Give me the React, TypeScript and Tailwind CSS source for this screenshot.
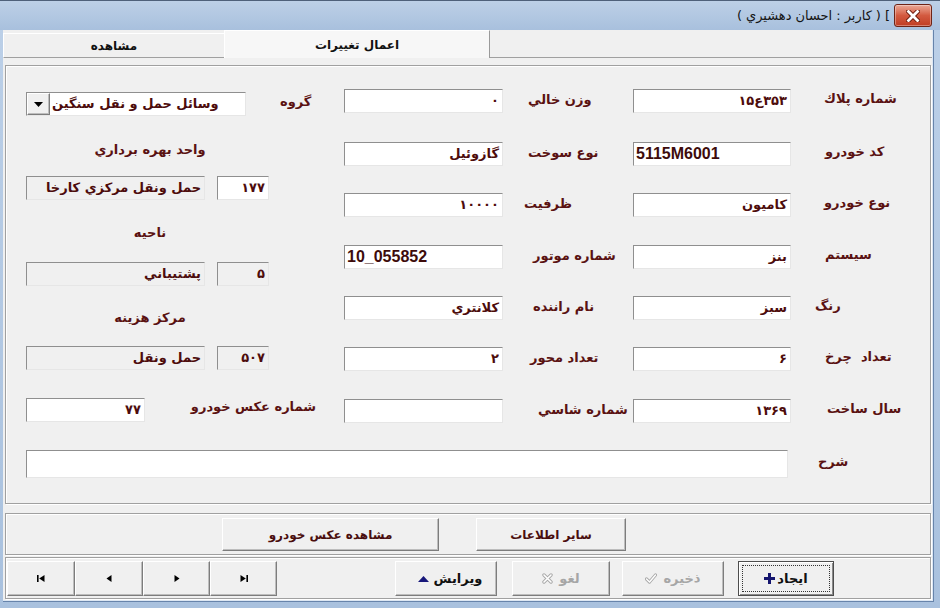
import React from "react";

const lbl = "text-[#5a1212] font-bold text-[13px] leading-[16px] whitespace-pre";
const valTxt = "text-[#4d0c0c] font-bold text-[13px] leading-[16px] whitespace-pre";
const sunken = "border border-t-[#8f8f8f] border-l-[#8f8f8f] border-r-[#e6e6e6] border-b-[#e6e6e6]";
const raised = "border border-t-white border-l-white border-r-[#7d7d7d] border-b-[#7d7d7d] shadow-[inset_-1px_-1px_0_#bdbdbd] bg-[#f0f0f0]";
const etched = "border border-[#a0a0a0] shadow-[inset_1px_1px_0_#ffffff,1px_1px_0_#ffffff]";

function Field({ cls, value, gray = false, latin = false }: { cls: string; value?: React.ReactNode; gray?: boolean; latin?: boolean }) {
  return (
    <div
      className={`${cls} h-[24px] ${sunken} ${gray ? "bg-[#f0f0f0]" : "bg-white"} flex items-center ${
        latin
          ? "justify-start pl-[2px] font-['Liberation_Sans',sans-serif] text-[16px] font-bold text-[#3d0b0b]"
          : `justify-end pr-[3px] ${valTxt}`
      }`}
    >
      {value}
    </div>
  );
}

type Row = {
  mt: string;
  mv: React.ReactNode;
  mLatin?: boolean;
  ml: string;
  mlp: string;
  rv: React.ReactNode;
  rLatin?: boolean;
  rl: string;
  rlp: string;
};

const rows: Row[] = [
  { mt: "mt-0", mv: "۰", ml: "وزن خالي", mlp: "pl-[25px]", rv: <bdo dir="ltr">۱۵ع۳۵۳</bdo>, rl: "شماره پلاك", rlp: "pl-[33px]" },
  { mt: "mt-[29px]", mv: "گازوئيل", ml: "نوع سوخت", mlp: "pl-[25px]", rv: "5115M6001", rLatin: true, rl: "کد خودرو", rlp: "pl-[34px]" },
  { mt: "mt-[27px]", mv: "۱۰۰۰۰", ml: "ظرفيت", mlp: "pl-[21px]", rv: "کاميون", rl: "نوع خودرو", rlp: "pl-[33px]" },
  { mt: "mt-[28px]", mv: "10_055852", mLatin: true, ml: "شماره موتور", mlp: "pl-[30px]", rv: "بنز", rl: "سيستم", rlp: "pl-[34px]" },
  { mt: "mt-[27px]", mv: "کلانتري", ml: "نام راننده", mlp: "pl-[30px]", rv: "سبز", rl: "رنگ", rlp: "pl-[24px]" },
  { mt: "mt-[27px]", mv: "۲", ml: "تعداد محور", mlp: "pl-[27px]", rv: "۶", rl: "تعداد  چرخ", rlp: "pl-[34px]" },
  { mt: "mt-[28px]", mv: "", ml: "شماره شاسي", mlp: "pl-[35px]", rv: "۱۳۶۹", rl: "سال ساخت", rlp: "pl-[36px]" },
];

function CloseBtn() {
  return (
    <div className="w-[38px] h-[23px] rounded-[3px] border border-[#6e2416] bg-gradient-to-b from-[#eaa896] via-[#d35a40] to-[#c03c22] shadow-[inset_0_0_0_1px_rgba(255,255,255,0.35)] flex items-center justify-center">
      <svg width="14" height="12" viewBox="0 0 14 12">
        <path d="M2.5 1.5 L11.5 10.5 M11.5 1.5 L2.5 10.5" stroke="#6a1a0c" strokeWidth="4.6" strokeLinecap="square" />
        <path d="M2.5 1.5 L11.5 10.5 M11.5 1.5 L2.5 10.5" stroke="#ffffff" strokeWidth="2.8" strokeLinecap="square" />
      </svg>
    </div>
  );
}

function NavIcon({ kind }: { kind: number }) {
  if (kind === 0)
    return (
      <svg width="8" height="7" viewBox="0 0 8 7">
        <rect x="0" y="0" width="1.6" height="7" fill="#000" />
        <path d="M7.5 0 L2.2 3.5 L7.5 7Z" fill="#000" />
      </svg>
    );
  if (kind === 1)
    return (
      <svg width="6" height="7" viewBox="0 0 6 7">
        <path d="M5.5 0 L0.5 3.5 L5.5 7Z" fill="#000" />
      </svg>
    );
  if (kind === 2)
    return (
      <svg width="6" height="7" viewBox="0 0 6 7">
        <path d="M0.5 0 L5.5 3.5 L0.5 7Z" fill="#000" />
      </svg>
    );
  return (
    <svg width="8" height="7" viewBox="0 0 8 7">
      <path d="M0.5 0 L5.8 3.5 L0.5 7Z" fill="#000" />
      <rect x="6.4" y="0" width="1.6" height="7" fill="#000" />
    </svg>
  );
}

export default function App() {
  return (
    <div className="w-[940px] h-[608px] overflow-hidden flex flex-col bg-gradient-to-b from-[#bcd0e8] to-[#a9c1de] font-['DejaVu_Sans',sans-serif]">
      {/* title bar */}
      <div className="h-[30px] flex items-center justify-end pr-[8px] border-t border-[#4f617a] bg-gradient-to-b from-[#bdd0e7] to-[#a8c0dd]">
        <div className="flex items-center gap-[4px] text-[13px] leading-[16px] text-[#141414] mr-[4px] mt-[1px]">
          <span>(</span>
          <span>دهشيري</span>
          <span>احسان</span>
          <span>:</span>
          <span>کاربر</span>
          <span>)</span>
          <span>[</span>
        </div>
        <CloseBtn />
      </div>

      <div className="flex pl-[3px]">
        <div className="flex flex-col border-r border-b border-[#6784ab] pr-[1px] pb-[1px] bg-[#dde7f3]">
          {/* client area */}
          <div className="w-[929px] h-[570px] bg-[#f0f0f0] flex flex-col">
            {/* tabs */}
            <div className="h-[28px] flex items-end">
              <div className="w-[221px] h-[25px] bg-[#f0f0f0] border-t border-l border-white border-b border-b-[#a0a0a0] flex items-center justify-center text-[12px] font-bold text-[#111]">
                مشاهده
              </div>
              <div className="w-[266px] h-[28px] bg-[#f7f7f7] border-t border-l border-white border-r border-r-[#9a9a9a] flex items-center justify-center text-[12px] font-bold text-[#111]">
                اعمال تغييرات
              </div>
              <div className="flex-1 h-full border-b border-[#a0a0a0]" />
            </div>

            {/* main group box */}
            <div className={`ml-[2px] mt-[7px] w-[926px] h-[439px] ${etched} flex flex-col pt-[23px]`}>
              <div className="flex items-start">
                {/* left column */}
                <div className="ml-[20px] mt-[3px] w-[290px] flex flex-col">
                  <div className="flex items-center h-[24px]">
                    <div className={`w-[220px] h-[24px] ${sunken} bg-white flex items-center`}>
                      <div className={`w-[23px] h-[22px] ${raised} flex items-center justify-center`}>
                        <svg width="9" height="5" viewBox="0 0 9 5">
                          <path d="M0 0 L9 0 L4.5 5Z" fill="#000" />
                        </svg>
                      </div>
                      <span className={`${valTxt} pl-[2px]`}>وسائل حمل و نقل سنگين</span>
                    </div>
                    <span className={`${lbl} ml-[34px] mb-[4px]`}>گروه</span>
                  </div>
                  <div className={`${lbl} mt-[26px] w-[248px] text-center`}>واحد بهره برداري</div>
                  <div className="mt-[18px] flex">
                    <Field cls="w-[179px]" gray value="حمل ونقل مرکزي کارخا" />
                    <div className="ml-[12px]">
                      <Field cls="w-[52px]" value="۱۷۷" />
                    </div>
                  </div>
                  <div className={`${lbl} mt-[25px] w-[248px] text-center`}>ناحيه</div>
                  <div className="mt-[21px] flex">
                    <Field cls="w-[179px]" gray value="پشتيباني" />
                    <div className="ml-[12px]">
                      <Field cls="w-[52px]" gray value="۵" />
                    </div>
                  </div>
                  <div className={`${lbl} mt-[24px] w-[248px] text-center`}>مرکز هزينه</div>
                  <div className="mt-[20px] flex">
                    <Field cls="w-[179px]" gray value="حمل ونقل" />
                    <div className="ml-[12px]">
                      <Field cls="w-[52px]" gray value="۵۰۷" />
                    </div>
                  </div>
                  <div className="mt-[28px] flex items-start">
                    <Field cls="w-[127px]" value="۷۷" />
                    <span className={`${lbl} ml-[46px] pt-[1px]`}>شماره عکس خودرو</span>
                  </div>
                </div>

                {/* middle + right columns */}
                <div className="ml-[28px] flex flex-col">
                  {rows.map((r, i) => (
                    <div key={i} className={`${r.mt} flex items-start h-[24px]`}>
                      <Field cls="w-[159px]" value={r.mv} latin={r.mLatin} />
                      <div className={`w-[130px] ${r.mlp} -mt-[2px]`}>
                        <span className={lbl}>{r.ml}</span>
                      </div>
                      <Field cls="w-[158px]" value={r.rv} latin={r.rLatin} />
                      <div className={`${r.rlp} -mt-[3px]`}>
                        <span className={lbl}>{r.rl}</span>
                      </div>
                    </div>
                  ))}
                </div>
              </div>

              {/* description */}
              <div className="mt-[27px] ml-[20px] flex items-start">
                <div className={`w-[762px] h-[28px] ${sunken} bg-white`} />
                <span className={`${lbl} ml-[30px] pt-[4px]`}>شرح</span>
              </div>
            </div>

            {/* panel 1 */}
            <div className={`ml-[2px] mt-[9px] w-[926px] h-[42px] ${etched} flex items-start pt-[4px]`}>
              <div className={`ml-[216px] w-[217px] h-[33px] ${raised} flex items-center justify-center text-[#4a0e0e] font-bold text-[12px]`}>
                مشاهده عکس خودرو
              </div>
              <div className={`ml-[37px] w-[150px] h-[33px] ${raised} flex items-center justify-center text-[#4a0e0e] font-bold text-[12px]`}>
                ساير اطلاعات
              </div>
            </div>

            {/* panel 2 */}
            <div className={`ml-[2px] mt-[2px] w-[926px] h-[42px] ${etched} flex items-start pt-[3px]`}>
              <div className={`ml-[1px] w-[68px] h-[35px] ${raised} flex items-center justify-center`}>
                <NavIcon kind={0} />
              </div>
              <div className={`w-[68px] h-[35px] ${raised} flex items-center justify-center`}>
                <NavIcon kind={1} />
              </div>
              <div className={`w-[67px] h-[35px] ${raised} flex items-center justify-center`}>
                <NavIcon kind={2} />
              </div>
              <div className={`w-[67px] h-[35px] ${raised} flex items-center justify-center`}>
                <NavIcon kind={3} />
              </div>

              <div className={`ml-[118px] w-[102px] h-[35px] ${raised} flex items-center justify-center gap-[5px] pl-[8px] text-[#111] font-bold text-[13px]`}>
                <svg width="11" height="6" viewBox="0 0 11 6">
                  <path d="M0 6 L5.5 0 L11 6Z" fill="#17177a" />
                </svg>
                <span>ويرايش</span>
              </div>
              <div className={`ml-[15px] w-[98px] h-[35px] ${raised} flex items-center justify-center gap-[6px] text-[#a6a6a6] font-bold text-[13px]`}>
                <svg width="11" height="11" viewBox="0 0 11 11">
                  <path d="M2 2 L9 9 M9 2 L2 9" stroke="#a8a8a8" strokeWidth="3.4" strokeLinecap="round" />
                  <path d="M2 2 L9 9 M9 2 L2 9" stroke="#ffffff" strokeWidth="1.6" strokeLinecap="round" />
                </svg>
                <span>لغو</span>
              </div>
              <div className={`ml-[12px] w-[102px] h-[35px] ${raised} flex items-center justify-center gap-[6px] text-[#a6a6a6] font-bold text-[13px]`}>
                <svg width="12" height="11" viewBox="0 0 12 11">
                  <path d="M1.5 6 L4.5 9 L10.5 2" fill="none" stroke="#a8a8a8" strokeWidth="3.2" strokeLinecap="round" strokeLinejoin="round" />
                  <path d="M1.5 6 L4.5 9 L10.5 2" fill="none" stroke="#ffffff" strokeWidth="1.4" strokeLinecap="round" strokeLinejoin="round" />
                </svg>
                <span>ذخيره</span>
              </div>
              <div className="ml-[14px] w-[96px] h-[35px] border border-[#4d4d4d] bg-[#f0f0f0] shadow-[inset_1px_1px_0_#ffffff,inset_-1px_-1px_0_#8a8a8a] p-[3px]">
                <div className="w-full h-full border border-dotted border-[#333] flex items-center justify-center gap-[2px] text-[#111] font-bold text-[13px]">
                  <svg width="11" height="11" viewBox="0 0 11 11">
                    <path d="M4 0h3v4h4v3H7v4H4V7H0V4h4z" fill="#15156e" />
                  </svg>
                  <span>ايجاد</span>
                </div>
              </div>
            </div>
          </div>
        </div>
      </div>
    </div>
  );
}
